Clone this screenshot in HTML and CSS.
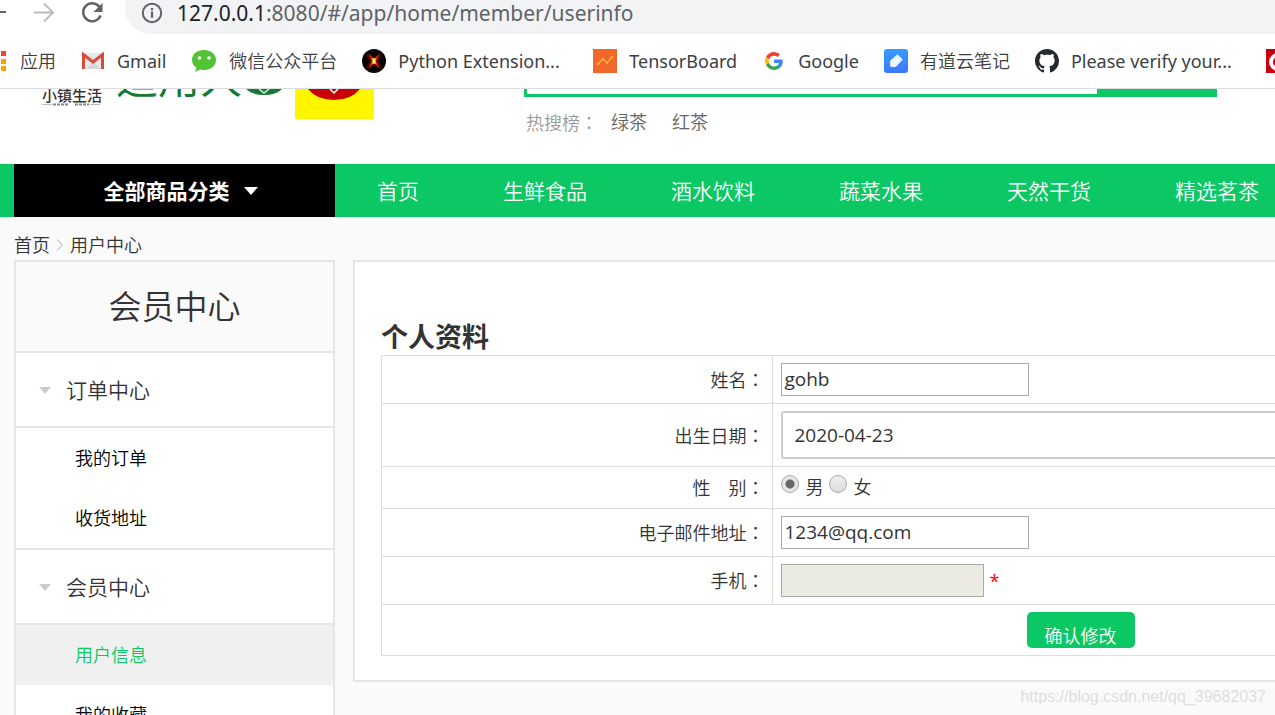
FILE: index.html
```html
<!DOCTYPE html>
<html lang="zh-CN">
<head>
<meta charset="utf-8">
<title>用户中心</title>
<link rel="stylesheet" href="styles.css">
</head>
<body>
<div class="browser">
  <div class="toolbar">
    <button class="tool" type="button" aria-label="后退"><svg width="12" height="24" viewBox="12 0 12 24"><path d="M4 12h14" stroke="#5f6368" stroke-width="2"/></svg></button>
    <button class="tool tool-forward" type="button" aria-label="前进"><svg width="24" height="24" viewBox="0 0 24 24" fill="none" stroke="#babcbe" stroke-width="2"><path d="M1 12.500h19M11 3.500l9 9-9 9"/></svg></button>
    <button class="tool tool-reload" type="button" aria-label="刷新"><svg width="24" height="24" viewBox="0 0 24 24"><path d="M19.500 7A9 9 0 1 0 20.600 15.500" fill="none" stroke="#5f6368" stroke-width="2.400"/><path d="M22.500 3v9h-9z" fill="#5f6368"/></svg></button>
    <div class="address">
      <svg width="22" height="22" viewBox="0 0 22 22"><circle cx="11" cy="11" r="9.200" fill="none" stroke="#5f6368" stroke-width="2"/><path d="M11 9.600v6.200M11 6v2.200" stroke="#5f6368" stroke-width="2.200"/></svg>
      <span class="url"><span class="host">127.0.0.1</span>:8080/#/app/home/member/userinfo</span>
    </div>
  </div>
  <nav class="bookmarks" aria-label="书签">
    <a class="bm-apps" href="#"><svg width="6" height="20" viewBox="0 0 6 20"><path d="M1 0h5v5H1z" fill="#f44336"/><path d="M1 8h5v5H1zM1 15h5v5H1z" fill="#ffa000"/></svg>应用</a>
    <a class="latin" href="#"><svg width="24" height="24" viewBox="0 0 24 24"><path d="M2 4h20v16H2z" fill="#e8e8e8"/><path d="M5 20l7-8 7 8z" fill="#d8d8d8"/><path d="M2.500 20V5.500L12 13l9.500-7.500V20" fill="none" stroke="#d94c3d" stroke-width="3"/></svg>Gmail</a>
    <a href="#"><svg width="26" height="24" viewBox="0 0 26 24"><path d="M13 1C6 1 1 5.300 1 11c0 3.500 1.800 6 4.500 7.800L4 23l5-2.400c1.300.3 2.600.4 4 .4 7 0 12-4.300 12-10S20 1 13 1z" fill="#50c433"/><circle cx="8.500" cy="9" r="1.800" fill="#fff"/><circle cx="18" cy="9" r="1.800" fill="#fff"/></svg>微信公众平台</a>
    <a class="latin bm-long" href="#"><svg width="24" height="24" viewBox="0 0 24 24"><circle cx="12" cy="12" r="12" fill="#080000"/><path d="M3 4l7 6 2-3 2 3 7-6-5 8 5 8-7-6-2 4-2-4-7 6 5-8z" fill="#650500"/><path d="M6 4l6 6 6-6-4 8 4 8-6-6-6 6 4-8z" fill="#ef2b08"/><path d="M10 9h4v6h-4z" fill="#ff9e15"/><path d="M11 10h2v4h-2z" fill="#fff2a0"/></svg>Python Extension...</a>
    <a class="latin" href="#"><svg width="24" height="24" viewBox="0 0 24 24"><path d="M0 0h24v24H0z" fill="#f2662a"/><path d="M5 15l5-5 4 4 5-6" fill="none" stroke="#ffb13c" stroke-width="1.500"/><g fill="#ffb13c"><circle cx="5" cy="15" r="1.300"/><circle cx="10" cy="10" r="1.300"/><circle cx="14" cy="14" r="1.300"/><circle cx="19" cy="8" r="1.300"/></g></svg>TensorBoard</a>
    <a class="latin" href="#"><svg width="24" height="24" viewBox="0 0 48 48"><path fill="#EA4335" d="M24 13.500c2.700 0 5 1 6.900 2.700l5.200-5.200C33 8 28.900 6 24 6 17 6 10.900 10 7.900 16l6 4.600C15.400 16.500 19.300 13.500 24 13.500z"/><path fill="#4285F4" d="M41.500 24.500c0-1.300-.1-2.400-.4-3.500H24v7h9.900c-.4 2.200-1.700 4-3.700 5.300l5.800 4.500c3.500-3.200 5.500-7.900 5.500-13.300z"/><path fill="#FBBC05" d="M13.900 27.500a10.800 10.800 0 0 1 0-6.900l-6-4.600a18 18 0 0 0 0 16.100z"/><path fill="#34A853" d="M24 42c4.900 0 9-1.600 12-4.300l-5.800-4.500c-1.600 1.100-3.700 1.800-6.200 1.800-4.700 0-8.600-3.100-10.100-7.400l-6 4.600C10.900 38 17 42 24 42z"/></svg>Google</a>
    <a href="#"><svg width="24" height="24" viewBox="0 0 24 24"><defs><linearGradient id="yd" x2="0" y2="1"><stop stop-color="#369bff"/><stop offset="1" stop-color="#3b78ff"/></linearGradient></defs><rect width="24" height="24" rx="3" fill="url(#yd)"/><path d="M13.500 5.200l5.300 5.300-6.500 7q-.7.500-1.500.4L6.700 17.700q-.6 0-.6-.7V12.500q0-.7.600-1.300z" fill="#eef4ff"/></svg>有道云笔记</a>
    <a class="latin bm-long" href="#"><svg width="24" height="24" viewBox="0 0 16 16"><path fill="#24292e" d="M8 0C3.580 0 0 3.580 0 8c0 3.540 2.290 6.530 5.470 7.590.4.070.55-.17.550-.38 0-.19-.01-.82-.01-1.490-2.010.37-2.530-.49-2.690-.94-.09-.23-.48-.94-.82-1.130-.28-.15-.68-.52-.01-.53.630-.01 1.080.58 1.230.82.720 1.210 1.870.87 2.330.66.070-.52.280-.87.510-1.070-1.780-.2-3.640-.89-3.640-3.950 0-.87.310-1.590.82-2.150-.08-.2-.36-1.020.08-2.120 0 0 .67-.21 2.200.82.640-.18 1.320-.27 2-.27s1.360.09 2 .27c1.530-1.040 2.200-.82 2.200-.82.440 1.100.16 1.920.08 2.120.51.560.82 1.270.82 2.150 0 3.070-1.870 3.750-3.650 3.950.29.250.54.730.54 1.480 0 1.070-.01 1.930-.01 2.200 0 .21.150.46.550.38A8.010 8.010 0 0 0 16 8c0-4.420-3.580-8-8-8z"/></svg>Please verify your...</a>
    <a href="#" aria-label="书签"><svg width="24" height="24" viewBox="0 0 24 24"><path d="M0 0h24v24H0z" fill="#c7000b"/><circle cx="12" cy="13" r="7" fill="none" stroke="#fff" stroke-width="4"/></svg></a>
  </nav>
</div>

<div class="page">
  <header class="masthead">
    <div class="logo">
      <div class="brand">小镇生活<svg width="58" height="3" viewBox="0 0 58 3"><path d="M0 1.500h10M48 1.500h10" stroke="#bbb"/><path d="M11 1.500h16M33 1.500h14" stroke="#888" stroke-width="2" stroke-dasharray="3 1"/></svg></div>
      <div class="slogan">适用人</div>
      <svg class="leaf" width="40" height="30" viewBox="0 0 40 30"><path d="M2 0q6 6 18 6T38 0z" fill="#147a33"/><path d="M15 0l5 4 5-4" fill="none" stroke="#d9f0dc" stroke-width="1.500"/></svg>
      <svg class="badge" width="79" height="30" viewBox="0 0 79 30"><path d="M0 0h79v30H0z" fill="#fff600"/><path d="M13 0q9 11 26 11T65 0z" fill="#c80008"/><path d="M35 0l4 4 4-4" fill="none" stroke="#fff" stroke-width="1.500"/></svg>
    </div>
    <div class="search">
      <form class="search-form"><input type="text" aria-label="搜索"><button type="button" aria-label="搜索"></button></form>
      <div class="hot"><span>热搜榜<span class="colon" lang="zh-TW">：</span></span><a href="#">绿茶</a><a href="#">红茶</a></div>
    </div>
  </header>

  <nav class="main-nav" aria-label="主导航">
    <a class="all" href="#">全部商品分类<svg width="14" height="8" viewBox="0 0 14 8"><path d="M0 0h14L7 8z" fill="#fff"/></svg></a>
    <a href="#">首页</a><a href="#">生鲜食品</a><a href="#">酒水饮料</a><a href="#">蔬菜水果</a><a href="#">天然干货</a><a href="#">精选茗茶</a>
  </nav>

  <div class="crumbs"><a href="#">首页</a><svg width="8" height="14" viewBox="0 0 8 14"><path d="M1 1.500L6.500 7 1 12.500" fill="none" stroke="#aaa"/></svg><a href="#">用户中心</a></div>

  <div class="columns">
    <aside class="sidebar">
      <h1>会员中心</h1>
      <section>
        <h2><svg width="12" height="7" viewBox="0 0 12 7"><path d="M0 0h12L6 7z" fill="#ccc"/></svg>订单中心</h2>
        <ul><li><a href="#">我的订单</a></li><li><a href="#">收货地址</a></li></ul>
      </section>
      <section>
        <h2><svg width="12" height="7" viewBox="0 0 12 7"><path d="M0 0h12L6 7z" fill="#ccc"/></svg>会员中心</h2>
        <ul><li class="active"><a href="#">用户信息</a></li><li><a href="#">我的收藏</a></li></ul>
      </section>
    </aside>
    <main class="panel">
      <h2>个人资料</h2>
      <form>
        <table>
          <tr><th><label for="name">姓名<span class="colon" lang="zh-TW">：</span></label></th><td><input class="field" id="name" type="text" value="gohb"></td></tr>
          <tr><th><label for="birth">出生日期<span class="colon" lang="zh-TW">：</span></label></th><td><input class="date" id="birth" type="text" value="2020-04-23"></td></tr>
          <tr><th>性　别<span class="colon" lang="zh-TW">：</span></th><td><div class="radios"><input id="male" name="sex" type="radio" checked><label for="male">男</label><input id="female" name="sex" type="radio"><label for="female">女</label></div></td></tr>
          <tr><th><label for="mail">电子邮件地址<span class="colon" lang="zh-TW">：</span></label></th><td><input class="field" id="mail" type="text" value="1234@qq.com"></td></tr>
          <tr><th><label for="phone">手机<span class="colon" lang="zh-TW">：</span></label></th><td><div class="phone"><input class="field field-off" id="phone" type="text" disabled><span class="req">*</span></div></td></tr>
          <tr><td class="actions" colspan="2"><button type="button">确认修改</button></td></tr>
        </table>
      </form>
    </main>
  </div>
</div>
<div class="watermark">https://blog.csdn.net/qq_39682037</div>
</body>
</html>
```
FILE: styles.css
```css
* { box-sizing: border-box; }
body, h1, h2, ul { margin: 0; padding: 0; }
html, body { height: 100%; }
body {
  display: flex;
  flex-direction: column;
  overflow: hidden;
  position: relative;
  background: #fafafa;
  color: #333;
  font: 350 18px/24px "Open Sans", "Noto Sans CJK SC", sans-serif;
}
input, button { font: inherit; color: inherit; }
a { color: inherit; text-decoration: none; white-space: nowrap; }
svg { display: block; flex: none; }
ul { list-style: none; }

.browser { flex: none; background: #fff; border-bottom: 1px solid #dadce0; overflow: hidden; }
.toolbar { display: flex; align-items: flex-start; height: 34px; }
.tool { display: flex; padding: 0; border: 0; background: none; }
.tool-forward { margin-left: 21px; }
.tool-reload { margin-left: 23px; }
.address {
  display: flex;
  align-items: center;
  gap: 14px;
  flex: 1;
  height: 52px;
  margin: -18px 0 0 21px;
  padding: 10px 0 0 16px;
  border-radius: 26px 0 0 26px;
  background: #f1f3f4;
}
.url { font-family: "Noto Sans", sans-serif; font-weight: 400; font-size: 21px; color: #5f6368; }
.host { color: #202124; }
.bookmarks { display: flex; align-items: center; gap: 25px; height: 54px; color: #3c4043; }
.bookmarks a { display: flex; align-items: center; flex: none; gap: 12px; }
.bookmarks .latin { font-family: "Noto Sans", sans-serif; font-weight: 400; }
.bookmarks .bm-apps { gap: 14px; }
.bookmarks .bm-long { width: 206px; }

.page { flex: 1; min-height: 0; overflow: hidden; }
.masthead { display: flex; gap: 150px; height: 75px; padding-left: 30px; background: #fff; overflow: hidden; }
.logo { display: flex; align-items: flex-end; width: 344px; height: 30px; }
.brand { margin-left: 12px; padding-bottom: 13px; font-size: 15px; font-weight: 500; line-height: 16px; white-space: nowrap; }
.slogan { margin-left: 14px; padding-bottom: 17px; font-size: 42px; line-height: 48px; color: #147a33; font-weight: 400; white-space: nowrap; }
.badge { margin-left: auto; }
.leaf { margin-left: 2px; }
.search { width: 693px; }
.search-form { display: flex; height: 54px; margin-top: -46px; }
.search-form input { flex: 1; border: 3px solid #0bc864; border-right: 0; background: #fff; }
.search-form button { width: 120px; border: 0; background: #0bc864; }
.hot { display: flex; gap: 25px; padding: 13px 0 0 2px; color: #666; }
.hot > span { margin-right: -12px; color: #999; }
.colon { font-family: "Noto Sans CJK TC", sans-serif; }

.main-nav { display: flex; height: 53px; padding-left: 14px; background: #0bc864; color: #fff; font-size: 21px; line-height: 54px; overflow: hidden; }
.main-nav a { flex: none; padding: 0 42px; }
.main-nav .all { display: flex; align-items: center; justify-content: center; gap: 14px; width: 321px; padding: 0 36px 0 48px; background: #000; font-weight: 700; }

.crumbs { display: flex; align-items: center; gap: 6px; height: 43px; padding: 13px 0 0 14px; }
.columns { display: flex; align-items: flex-start; gap: 18px; width: 1800px; padding-left: 14px; }
.sidebar { flex: none; width: 321px; border: 2px solid #e5e5e5; background: #fff; }
.sidebar h1 { height: 91px; background: #fafafa; border-bottom: 2px solid #e5e5e5; font-size: 33px; font-weight: 350; line-height: 90px; text-align: center; }
.sidebar h2 { display: flex; align-items: center; gap: 15px; height: 75px; padding: 1px 0 0 23px; border-bottom: 2px solid #e5e5e5; font-size: 21px; font-weight: 350; }
.sidebar section + section { border-top: 2px solid #e5e5e5; }
.sidebar li { height: 60px; padding-left: 59px; line-height: 60px; color: #000; }
.sidebar .active { background: #f0f0f0; color: #0bc864; }

.panel { flex: 1; padding: 58px 18px 24px 26px; border: 2px solid #e5e5e5; background: #fff; }
.panel h2 { padding-bottom: 1px; font-size: 27px; line-height: 34px; }
.panel table { width: 100%; border-collapse: collapse; table-layout: fixed; }
.panel th, .panel td { padding: 7px 8px; border: 1px solid #ddd; text-align: left; }
.panel th { width: 28%; font-weight: 350; line-height: 22px; text-align: right; }
.field { display: block; width: 248px; height: 33px; padding: 0 2px 2px; border: 1px solid #a9a9a9; background: #fff; font-size: 19px; font-weight: 400; }
.field-off { width: 203px; background: #ebebe2; }
.date { display: block; width: 100%; height: 48px; padding: 0 11px; border: 2px solid #ccc; border-radius: 3px; background: #fff; font-size: 19px; font-weight: 400; }
.phone { display: flex; align-items: center; gap: 5px; }
.req { color: #f00; font-weight: 400; }
.radios { display: flex; align-items: center; gap: 6px; height: 26px; }
.radios input {
  appearance: none;
  width: 18px;
  height: 18px;
  margin: 0 0 6px;
  border: 1px solid #aaa;
  border-radius: 50%;
  background: linear-gradient(#eee, #ddd);
}
.radios input:checked { background: radial-gradient(circle, #666 4px, #e4e4e4 5px); }
.panel .radios { margin-bottom: 1px; }
.panel .actions { text-align: center; }
.actions button { display: block; width: 108px; height: 36px; margin: 0 auto; padding: 12px 0 0; border: 0; border-radius: 5px; background: #0bc864; color: #fff; }

.watermark { position: absolute; right: 9px; bottom: 6px; font: 16px/24px "Liberation Sans", sans-serif; color: #dedede; }
```
